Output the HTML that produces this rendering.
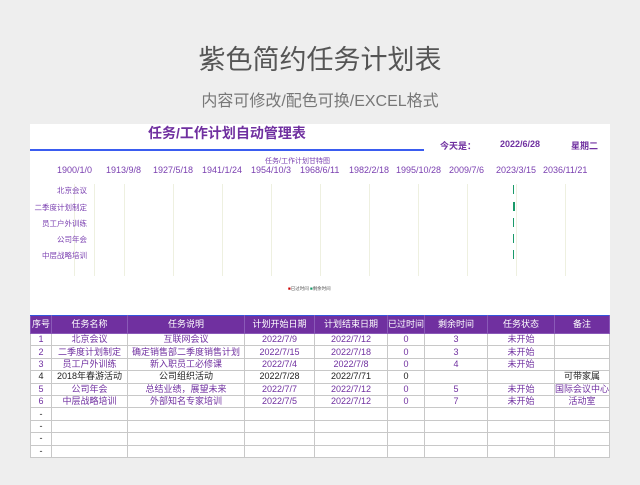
<!DOCTYPE html>
<html><head><meta charset="utf-8"><style>
*{margin:0;padding:0;box-sizing:border-box}
body{width:640px;height:485px;background:#eeeeee;font-family:"Liberation Sans","Noto Sans CJK SC",sans-serif;position:relative;overflow:hidden}
.a{position:absolute;white-space:nowrap}
.card{position:absolute;left:30px;top:124px;width:580px;height:333px;background:#fff}
table{position:absolute;left:30px;top:315px;border-collapse:collapse;table-layout:fixed;font-size:9px}
td,th{border:1px solid #c8c8c8;text-align:center;height:12.4px;padding:0;color:#7030a0;font-weight:normal;line-height:11px;overflow:hidden;white-space:nowrap}
th{background:#7030a0;color:#fff;height:18px;border-color:#8a5ab8;border-top:1px solid #3355dd}
tr.k td{color:#222}
.ax{font-size:9px;color:#7a3fb0;top:165px}
.gl{position:absolute;top:184px;width:1px;height:92px;background:#eef0e0}
.lb{position:absolute;right:553px;font-size:7.5px;color:#7a3fb0}
</style></head><body>
<div class="a" style="left:0;width:640px;text-align:center;top:38px;font-size:27px;color:#555">紫色简约任务计划表</div>
<div class="a" style="left:0;width:640px;text-align:center;top:87px;font-size:16px;color:#777">内容可修改/配色可换/EXCEL格式</div>
<div class="card"></div>
<div class="a" style="left:148px;top:123px;font-size:14px;font-weight:bold;color:#7030a0">任务/工作计划自动管理表</div>
<div class="a" style="left:30px;top:149px;width:394px;height:1.5px;background:#3a5cf0"></div>
<div class="a" style="left:440px;top:139px;font-size:9px;font-weight:bold;color:#7030a0">今天是：</div>
<div class="a" style="left:500px;top:139px;font-size:9px;font-weight:bold;color:#7030a0">2022/6/28</div>
<div class="a" style="left:571px;top:139px;font-size:9px;font-weight:bold;color:#7030a0">星期二</div>
<div class="a" style="left:265px;top:156px;font-size:7px;color:#7a3fb0">任务/工作计划甘特图</div>
<div class="a ax" style="left:57px">1900/1/0</div>
<div class="a ax" style="left:106px">1913/9/8</div>
<div class="a ax" style="left:153px">1927/5/18</div>
<div class="a ax" style="left:202px">1941/1/24</div>
<div class="a ax" style="left:251px">1954/10/3</div>
<div class="a ax" style="left:300px">1968/6/11</div>
<div class="a ax" style="left:349px">1982/2/18</div>
<div class="a ax" style="left:396px">1995/10/28</div>
<div class="a ax" style="left:449px">2009/7/6</div>
<div class="a ax" style="left:496px">2023/3/15</div>
<div class="a ax" style="left:543px">2036/11/21</div>
<div class="gl" style="left:74px"></div><div class="gl" style="left:94px"></div><div class="gl" style="left:124px"></div><div class="gl" style="left:173px"></div><div class="gl" style="left:222px"></div><div class="gl" style="left:271px"></div><div class="gl" style="left:320px"></div><div class="gl" style="left:369px"></div><div class="gl" style="left:418px"></div><div class="gl" style="left:467px"></div><div class="gl" style="left:516px"></div><div class="gl" style="left:565px"></div>
<div class="a lb" style="top:185px">北京会议</div>
<div class="a lb" style="top:202px">二季度计划制定</div>
<div class="a lb" style="top:218px">员工户外训练</div>
<div class="a lb" style="top:234px">公司年会</div>
<div class="a lb" style="top:250px">中层战略培训</div>
<div class="a" style="left:513px;top:185px;width:1px;height:9px;background:#1a9a6a"></div>
<div class="a" style="left:513px;top:202px;width:1.5px;height:9px;background:#1a9a6a"></div>
<div class="a" style="left:513px;top:218px;width:1px;height:9px;background:#1a9a6a"></div>
<div class="a" style="left:513px;top:234px;width:1px;height:9px;background:#1a9a6a"></div>
<div class="a" style="left:513px;top:250px;width:1px;height:9px;background:#1a9a6a"></div>
<div class="a" style="left:288px;top:286px;font-size:4.5px;color:#555"><span style="color:#c00">■</span>已过时间 <span style="color:#1a9a6a">■</span>剩余时间</div>
<table>
<colgroup><col style="width:21px"><col style="width:76px"><col style="width:117px"><col style="width:70px"><col style="width:73px"><col style="width:37px"><col style="width:63px"><col style="width:67px"><col style="width:55px"></colgroup>
<tr><th>序号</th><th>任务名称</th><th>任务说明</th><th>计划开始日期</th><th>计划结束日期</th><th>已过时间</th><th>剩余时间</th><th>任务状态</th><th>备注</th></tr>
<tr><td>1</td><td>北京会议</td><td>互联网会议</td><td>2022/7/9</td><td>2022/7/12</td><td>0</td><td>3</td><td>未开始</td><td></td></tr>
<tr><td>2</td><td>二季度计划制定</td><td>确定销售部二季度销售计划</td><td>2022/7/15</td><td>2022/7/18</td><td>0</td><td>3</td><td>未开始</td><td></td></tr>
<tr><td>3</td><td>员工户外训练</td><td>新入职员工必修课</td><td>2022/7/4</td><td>2022/7/8</td><td>0</td><td>4</td><td>未开始</td><td></td></tr>
<tr class="k"><td>4</td><td>2018年春游活动</td><td>公司组织活动</td><td>2022/7/28</td><td>2022/7/71</td><td>0</td><td></td><td></td><td>可带家属</td></tr>
<tr><td>5</td><td>公司年会</td><td>总结业绩，展望未来</td><td>2022/7/7</td><td>2022/7/12</td><td>0</td><td>5</td><td>未开始</td><td>国际会议中心</td></tr>
<tr><td>6</td><td>中层战略培训</td><td>外部知名专家培训</td><td>2022/7/5</td><td>2022/7/12</td><td>0</td><td>7</td><td>未开始</td><td>活动室</td></tr>
<tr class="k"><td>-</td><td></td><td></td><td></td><td></td><td></td><td></td><td></td><td></td></tr>
<tr class="k"><td>-</td><td></td><td></td><td></td><td></td><td></td><td></td><td></td><td></td></tr>
<tr class="k"><td>-</td><td></td><td></td><td></td><td></td><td></td><td></td><td></td><td></td></tr>
<tr class="k"><td>-</td><td></td><td></td><td></td><td></td><td></td><td></td><td></td><td></td></tr>
</table>
</body></html>
